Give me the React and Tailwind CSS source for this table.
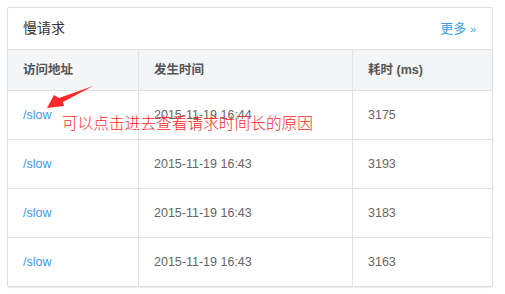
import React from 'react';

const rows = [
  { url: '/slow', time: '2015-11-19 16:44', cost: 3175 },
  { url: '/slow', time: '2015-11-19 16:43', cost: 3193 },
  { url: '/slow', time: '2015-11-19 16:43', cost: 3183 },
  { url: '/slow', time: '2015-11-19 16:43', cost: 3163 },
];

const font = { fontFamily: '"Liberation Sans", Arial, "Noto Sans CJK SC", sans-serif' };

const App = () => {
  return (
    <div className="relative w-[505px] h-[294px] bg-white" style={font}>
      <div className="pt-[7px] pl-[7px]">
        <div className="w-[486px] border border-[#dddddd] rounded-[2px] bg-white shadow-[0_1px_1px_rgba(0,0,0,0.08)]">
          {/* panel heading */}
          <div className="h-[42px] box-border border-b border-[#e3e3e3] flex items-center justify-between px-[15px]">
            <span className="text-[14px] text-[#333333]">慢请求</span>
            <a className="text-[13px] text-[#3a9de6] pr-[1px]">更多 <span className="text-[11px]">»</span></a>
          </div>

          {/* table head */}
          <div className="grid grid-cols-[131px_214px_1fr] bg-[#f4f5f7] border-b border-[#e3e3e3] h-[41px] box-border text-[12.5px] font-bold text-[#555555]">
            <div className="border-r border-[#e3e3e3] px-[15px] flex items-center">访问地址</div>
            <div className="border-r border-[#e3e3e3] px-[15px] flex items-center">发生时间</div>
            <div className="px-[15px] flex items-center">耗时 (ms)</div>
          </div>

          {/* rows */}
          {rows.map((r, idx) => (
            <div
              key={idx}
              className={
                idx < rows.length - 1
                  ? 'grid grid-cols-[131px_214px_1fr] h-[49px] box-border border-b border-[#e3e3e3] text-[12.5px] text-[#666666]'
                  : 'grid grid-cols-[131px_214px_1fr] h-[48px] box-border text-[12.5px] text-[#666666]'
              }
            >
              <div className="border-r border-[#e3e3e3] px-[15px] flex items-center">
                <a className="text-[#3a9de6]">{r.url}</a>
              </div>
              <div className="border-r border-[#e3e3e3] px-[15px] flex items-center">{r.time}</div>
              <div className="px-[15px] flex items-center">{r.cost}</div>
            </div>
          ))}
        </div>
      </div>

      {/* annotation overlay */}
      <svg className="absolute left-0 top-0" width="505" height="294" viewBox="0 0 505 294">
        <polygon points="47,108 54,95 59,98 93,86 63,102 64,106" fill="#fc2a2a" />
      </svg>
      <div
        className="absolute left-[62px] top-[114px] text-[15.7px] leading-[18px] text-[#ff1f1f] whitespace-nowrap"
        style={{ fontFamily: '"Noto Sans CJK SC", sans-serif', fontWeight: 300 }}
      >
        可以点击进去查看请求时间长的原因
      </div>
    </div>
  );
};

export default App;
